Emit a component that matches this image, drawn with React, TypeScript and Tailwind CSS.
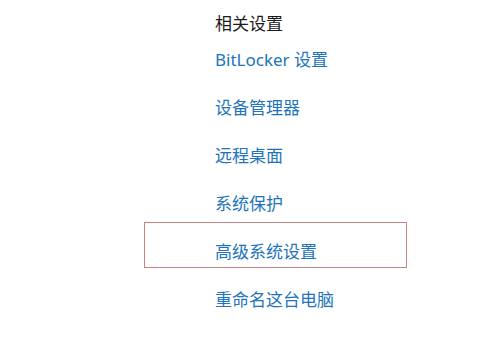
import React from 'react';

const links = ['BitLocker 设置', '设备管理器', '远程桌面', '系统保护', '高级系统设置', '重命名这台电脑'];

const App: React.FC = () => {
  return (
    <div
      className="w-[500px] h-[346px] bg-white overflow-hidden"
      style={{ fontFamily: '"Noto Sans", "Noto Sans CJK SC", sans-serif' }}
    >
      <div className="pl-[215px] pt-[13px]">
        <h3 className="h-[22px] leading-[22px] text-[17px] text-[#1b1b1b]">相关设置</h3>
        {links.map((label, i) => (
          <div key={label} className="relative h-[48px] flex items-center">
            {i === 4 && (
              <span className="absolute left-[-71px] top-[-5px] w-[263px] h-[46px] border-[1.5px] border-[#c98585]" />
            )}
            <a className="text-[17px] leading-none text-[#2174b9] cursor-pointer">{label}</a>
          </div>
        ))}
      </div>
    </div>
  );
};

export default App;
